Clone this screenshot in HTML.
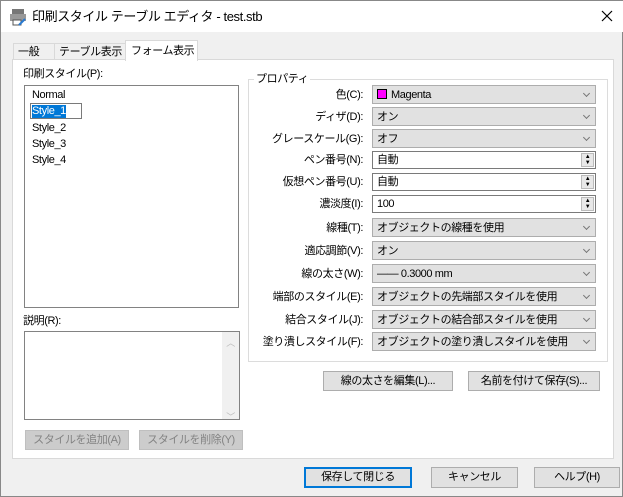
<!DOCTYPE html>
<html><head><meta charset="utf-8"><style>
*{box-sizing:border-box;margin:0;padding:0}
body{width:623px;height:497px;background:#f0f0f0;font-family:"Liberation Sans","Noto Sans CJK JP",sans-serif;font-size:11px;letter-spacing:-0.4px;color:#000;position:relative;overflow:hidden;border:1px solid #888;white-space:nowrap}
.a{position:absolute;line-height:14px}
.title{left:0;top:0;width:623px;height:31px;background:#fff}
.cb{position:absolute;left:371px;width:224px;height:19px;background:#e1e1e1;border:1px solid #adadad;padding:2px 4px 0;line-height:15px;overflow:hidden}
.cb::after{content:"";position:absolute;right:6px;top:5px;width:4px;height:4px;border-right:1px solid #777;border-bottom:1px solid #777;transform:rotate(45deg)}
.sp{position:absolute;left:371px;width:224px;height:18px;background:#fff;border:1px solid #7a7a7a;padding:0 4px;line-height:16px}
.sp i{position:absolute;right:1px;top:1px;width:13px;height:14px;background:#e8e8e8;border:1px solid #bbb;font-style:normal;font-size:6px;line-height:6px;text-align:center}
.lb{position:absolute;right:259px;text-align:right;line-height:14px}
.btn{position:absolute;height:20px;background:#e1e1e1;border:1px solid #adadad;text-align:center;line-height:18px}
.dis{background:#ccc;border-color:#bfbfbf;color:#838383}
</style></head><body>
<div class="a title"></div>
<svg class="a" style="left:8px;top:7px" width="18" height="18"><rect x="3" y="1" width="12" height="6" fill="#777"/><rect x="1" y="6" width="16" height="7" fill="#999"/><rect x="4" y="12" width="8" height="5" fill="#fff" stroke="#555"/><path d="M10 17 L16 11" stroke="#2a7ad0" stroke-width="2"/></svg>
<div class="a" style="left:31px;top:9px;font-size:13px">印刷スタイル テーブル エディタ - test.stb</div>
<svg class="a" style="left:600px;top:9px" width="12" height="12"><path d="M1 1L11 11M11 1L1 11" stroke="#000" stroke-width="1.2"/></svg>
<div class="a" style="left:11px;top:58px;width:602px;height:400px;background:#fff;border:1px solid #d9d9d9"></div>
<div class="a" style="left:12px;top:42px;width:42px;height:17px;border:1px solid #d9d9d9;background:#f0f0f0;padding:1px 4px">一般</div>
<div class="a" style="left:53px;top:42px;width:72px;height:17px;border:1px solid #d9d9d9;background:#f0f0f0;padding:1px 4px">テーブル表示</div>
<div class="a" style="left:124px;top:39px;width:73px;height:21px;border:1px solid #d9d9d9;border-bottom:none;background:#fff;padding:3px 5px">フォーム表示</div>
<div class="a" style="left:22px;top:66px">印刷スタイル(P):</div>
<div class="a" style="left:23px;top:84px;width:215px;height:223px;border:1px solid #828282;background:#fff"></div>
<div class="a" style="left:31px;top:87px">Normal</div>
<div class="a" style="left:29px;top:102px;width:52px;height:16px;border:1px solid #7a7a7a;background:#fff"></div>
<div class="a" style="left:31px;top:104px;background:#0078d7;color:#fff;line-height:13px">Style_1</div>
<div class="a" style="left:31px;top:120px">Style_2</div>
<div class="a" style="left:31px;top:136px">Style_3</div>
<div class="a" style="left:31px;top:152px">Style_4</div>
<div class="a" style="left:22px;top:313px">説明(R):</div>
<div class="a" style="left:23px;top:330px;width:216px;height:89px;border:1px solid #828282;background:#fff"></div>
<div class="a" style="left:221px;top:331px;width:17px;height:87px;background:#f0f0f0;color:#bbb;font-size:9px;text-align:center"><div style="margin-top:4px">︿</div><div style="margin-top:60px">﹀</div></div>
<div class="btn dis" style="left:24px;top:429px;width:104px">スタイルを追加(A)</div>
<div class="btn dis" style="left:138px;top:429px;width:104px">スタイルを削除(Y)</div>
<div class="a" style="left:247px;top:78px;width:360px;height:283px;border:1px solid #dcdcdc"></div>
<div class="a" style="left:253px;top:71px;background:#fff;padding:0 2px">プロパティ</div>
<div class="lb" style="top:87px">色(C):</div><div class="cb" style="top:84px"><span style="display:inline-block;width:10px;height:10px;background:#f0f;border:1px solid #000;vertical-align:-1px;margin-right:4px"></span>Magenta</div>
<div class="lb" style="top:109px">ディザ(D):</div><div class="cb" style="top:106px">オン</div>
<div class="lb" style="top:131px">グレースケール(G):</div><div class="cb" style="top:128px">オフ</div>
<div class="lb" style="top:152px">ペン番号(N):</div><div class="sp" style="top:150px">自動<i>▲<br>▼</i></div>
<div class="lb" style="top:174px">仮想ペン番号(U):</div><div class="sp" style="top:172px">自動<i>▲<br>▼</i></div>
<div class="lb" style="top:196px">濃淡度(I):</div><div class="sp" style="top:194px">100<i>▲<br>▼</i></div>
<div class="lb" style="top:220px">線種(T):</div><div class="cb" style="top:217px">オブジェクトの線種を使用</div>
<div class="lb" style="top:243px">適応調節(V):</div><div class="cb" style="top:240px">オン</div>
<div class="lb" style="top:266px">線の太さ(W):</div><div class="cb" style="top:263px">—— 0.3000 mm</div>
<div class="lb" style="top:289px">端部のスタイル(E):</div><div class="cb" style="top:286px">オブジェクトの先端部スタイルを使用</div>
<div class="lb" style="top:312px">結合スタイル(J):</div><div class="cb" style="top:309px">オブジェクトの結合部スタイルを使用</div>
<div class="lb" style="top:334px">塗り潰しスタイル(F):</div><div class="cb" style="top:331px">オブジェクトの塗り潰しスタイルを使用</div>
<div class="btn" style="left:322px;top:370px;width:130px">線の太さを編集(L)...</div>
<div class="btn" style="left:467px;top:370px;width:132px">名前を付けて保存(S)...</div>
<div class="btn" style="left:303px;top:466px;width:108px;height:21px;border:2px solid #0078d7;line-height:17px">保存して閉じる</div>
<div class="btn" style="left:430px;top:466px;width:87px;height:21px">キャンセル</div>
<div class="btn" style="left:533px;top:466px;width:86px;height:21px">ヘルプ(H)</div>
</body></html>
